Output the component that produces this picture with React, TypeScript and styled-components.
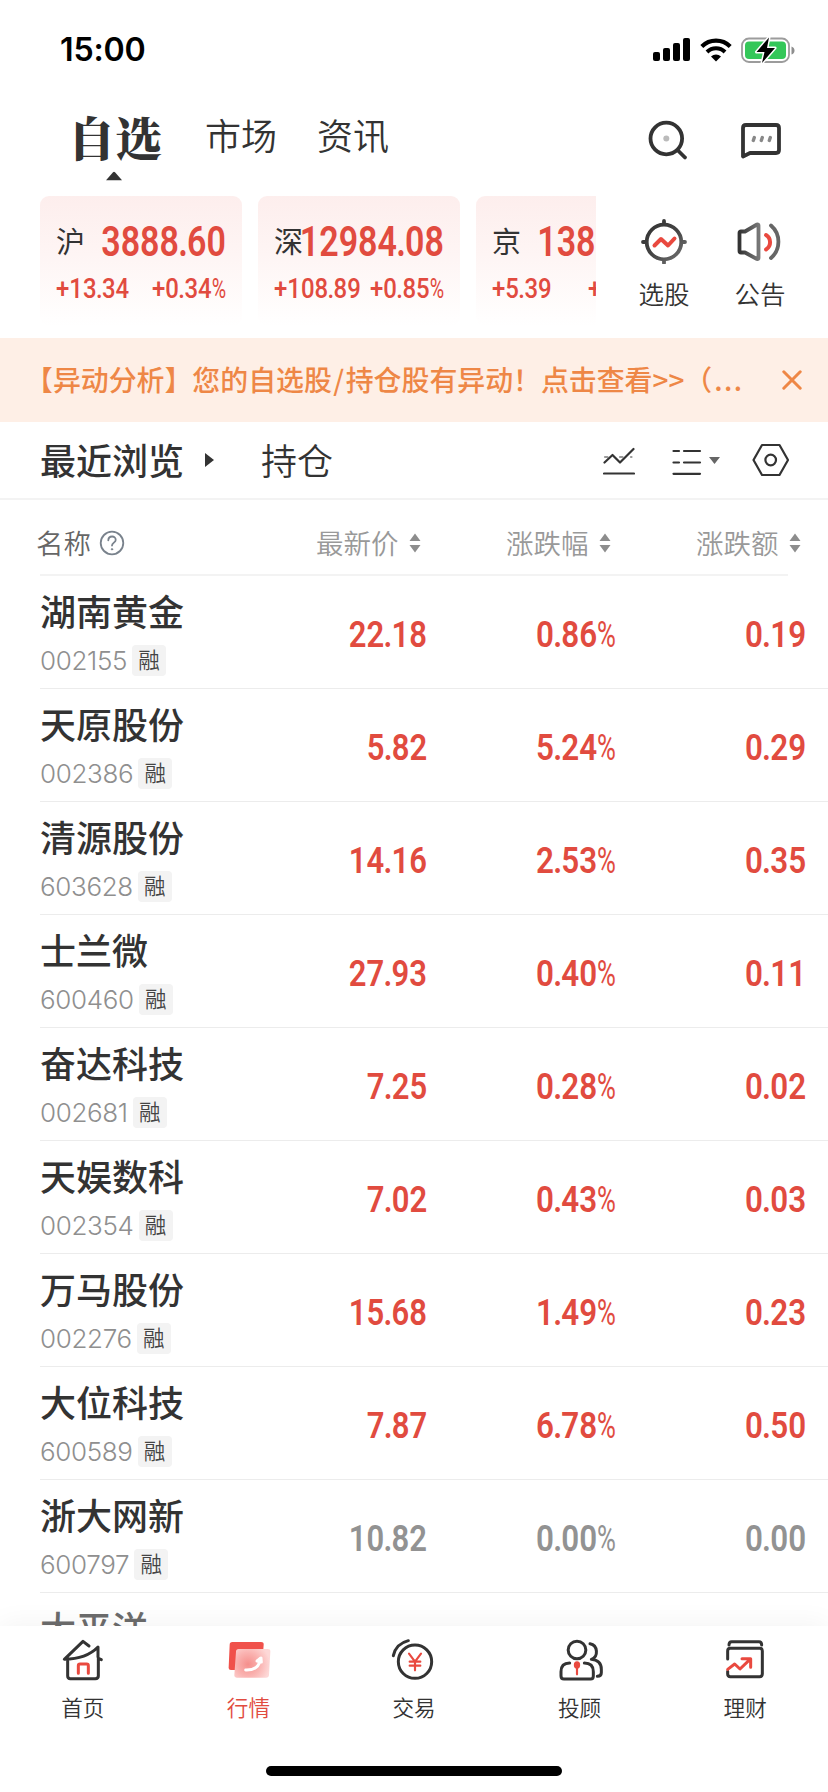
import React from "react";
import styled, { createGlobalStyle } from "styled-components";

const RED = "#e14b3f";
const INK = "#333333";
const CJK = `"Noto Sans CJK SC", "Noto Sans", sans-serif`;

const GlobalStyle = createGlobalStyle`
  * { box-sizing: border-box; }
  body { margin: 0; background: #fff; font-family: ${CJK}; color: ${INK}; }
  svg { display: block; flex: none; }
`;

const Screen = styled.div`
  width: 828px;
  height: 1792px;
  display: flex;
  flex-direction: column;
  overflow: hidden;
  background: #fff;
`;

/* status bar */
const StatusBar = styled.div`
  height: 96px;
  padding: 3px 33px 0 60px;
  display: flex;
  align-items: center;
  justify-content: space-between;
`;
const Clock = styled.div`
  font: 600 32.2px/40px Inter, sans-serif;
  letter-spacing: -0.2px;
  margin-top: 1px;
  color: #000;
`;
const StatusIcons = styled.div`
  display: flex;
  gap: 9px;
  align-items: center;
`;

/* top navigation */
const TopNav = styled.div`
  height: 100px;
  display: flex;
  padding: 0 45px 0 68px;
`;
const NavTitle = styled.div`
  width: 98px;
  height: 86px;
  display: flex;
  flex-direction: column;
  font-family: "Noto Serif CJK SC", "Noto Serif SC", ${CJK};
  font-size: 47px;
  line-height: 80px;
  font-weight: 900;
  white-space: nowrap;
`;
const NavTitleText = styled.div`
  height: 75px;
`;
const NavCaret = styled.svg`
  margin-left: 37px;
`;
const NavItem = styled.div`
  margin-left: ${(p: { $gap: number }) => p.$gap}px;
  font-size: 36px;
  line-height: 77px;
  font-weight: 350;
`;
const NavActions = styled.div`
  margin-left: auto;
  display: flex;
  gap: 49px;
  padding-top: 23px;
  height: 70px;
`;

/* index cards */
const IndexStrip = styled.div`
  height: 142px;
  padding-left: 40px;
  display: flex;
`;
const CardList = styled.div`
  width: 556px;
  display: flex;
  gap: 16px;
  overflow: hidden;
`;
const Card = styled.div`
  flex: none;
  width: 202px;
  height: 130px;
  padding: 22px 16.5px 0 16px;
  border-radius: 9px;
  background: linear-gradient(#fdeeed 0%, #fef5f4 45%, #ffffff 100%);
`;
const CardTop = styled.div`
  height: 48px;
  display: flex;
  align-items: center;
  justify-content: space-between;
`;
const CardName = styled.div`
  width: 29px;
  font-size: 29px;
  line-height: 40px;
  margin-top: -5px;
`;
const CardBottom = styled.div`
  height: 47px;
  display: flex;
  align-items: center;
  justify-content: space-between;
`;
const Shortcuts = styled.div`
  display: flex;
  padding: 20px 0 0 20px;
`;
const Shortcut = styled.div`
  width: 96px;
  display: flex;
  flex-direction: column;
  align-items: center;
  font-size: 25.5px;
  line-height: 36px;
  gap: 10.5px;
  font-weight: 350;
`;

/* condensed figures */
type FigureProps = { $size: number; $scale: number; $weight: number; $color?: string; $origin?: string };
const Figure = styled.span<FigureProps>`
  display: inline-flex;
  align-items: baseline;
  font-family: Roboto, sans-serif;
  font-size: ${(p) => p.$size}px;
  font-weight: ${(p) => p.$weight};
  line-height: 1.2;
  color: ${(p) => p.$color || RED};
  transform: scaleX(${(p) => p.$scale});
  transform-origin: ${(p) => p.$origin || "right"} center;
  white-space: nowrap;
`;
const FigureBox = styled.span`
  display: flex;
  width: 0;
  justify-content: ${(p: { $origin: string }) => (p.$origin === "left" ? "flex-start" : "flex-end")};
`;
const Dot = styled.span`
  margin: 0 -0.025em;
`;
const Percent = styled.span`
  display: inline-block;
  width: 0.59em;
  font-weight: 450;
  transform: scaleX(0.82);
  transform-origin: left center;
`;

function Num({ value, size, scale, weight = 580, color, origin = "right" }: {
  value: string; size: number; scale: number; weight?: number; color?: string; origin?: string;
}) {
  const pct = value.endsWith("%");
  const [whole, frac] = value.replace("%", "").split(".");
  return (
    <FigureBox $origin={origin}>
      <Figure $size={size} $scale={scale} $weight={weight} $color={color} $origin={origin}>
        {whole}<Dot>.</Dot>{frac}{pct && <Percent>%</Percent>}
      </Figure>
    </FigureBox>
  );
}

/* notice banner */
const Notice = styled.div`
  height: 84px;
  padding: 0 26px 0 25px;
  display: flex;
  align-items: center;
  justify-content: space-between;
  background: #feefe6;
  color: #ee8746;
`;
const NoticeText = styled.div`
  font-size: 27.9px;
  font-weight: 450;
  line-height: 40px;
  margin-top: -2px;
  white-space: nowrap;
`;
const Slash = styled.span`
  padding: 0 1.5px;
`;
const Dots = styled.span`
  padding-left: 2px;
  letter-spacing: 1.5px;
`;

/* group bar */
const GroupBar = styled.div`
  height: 78px;
  padding: 0 39px 0 40px;
  display: flex;
  align-items: center;
  border-bottom: 2px solid #f3f3f3;
`;
const GroupName = styled.div<{ $active?: boolean }>`
  font-size: 36px;
  line-height: 50px;
  margin-top: -2px;
  font-weight: ${(p) => (p.$active ? 500 : 350)};
`;
const GroupCaret = styled.svg`
  margin: 0 46px 0 20px;
`;
const GroupTools = styled.div`
  margin-left: auto;
  display: flex;
  align-items: center;
`;
const ListTool = styled.div`
  margin: 0 32px 0 37px;
  display: flex;
  align-items: center;
  gap: 7px;
`;

/* quote table */
const HeadRow = styled.div`
  height: 76px;
  padding-top: 11px;
  margin: 0 40px 0 40px;
  display: flex;
  align-items: center;
  border-bottom: 2px solid #f3f3f3;
  font-size: 27.5px;
  line-height: 40px;
  font-weight: 350;
  color: #999;
`;
const HeadName = styled.div`
  width: 280px;
  flex: none;
  margin-left: -4px;
  display: flex;
  align-items: center;
  gap: 8px;
  color: #666;
`;
const HeadCell = styled.div<{ $w: number }>`
  width: ${(p) => p.$w}px;
  flex: none;
  display: flex;
  align-items: center;
  gap: 10px;
`;
const HeadLabel = styled.span`
  margin-top: -2px;
`;
const Rows = styled.div`
  height: 1050px;
  overflow: hidden;
`;
const Row = styled.div`
  height: 113px;
  margin-left: 40px;
  display: flex;
  align-items: center;
  border-bottom: 1px solid #ececec;
`;
const Stock = styled.div`
  width: 220px;
  height: 112px;
  padding-top: 10px;
`;
const StockName = styled.div<{ $dim?: boolean }>`
  font-size: 36px;
  line-height: 48px;
  font-weight: 500;
  color: ${(p) => (p.$dim ? "#6c6c6c" : INK)};
`;
const StockMeta = styled.div`
  display: flex;
  align-items: center;
  gap: 5px;
  margin-top: 11px;
`;
const Code = styled.span`
  font: 300 26px/30px Inter, sans-serif;
  letter-spacing: -0.35px;
  color: #8f8f8f;
`;
const Tag = styled.span`
  width: 34px;
  height: 31px;
  border-radius: 4px;
  background: #f3f3f3;
  font-size: 21.5px;
  line-height: 27px;
  text-align: center;
  font-weight: 350;
  color: #444;
`;
const Cell = styled.div<{ $w: number }>`
  width: ${(p) => p.$w}px;
  flex: none;
  display: flex;
  justify-content: flex-end;
  padding-top: 6px;
`;

/* tab bar */
const TabBar = styled.div`
  position: relative;
  height: 130px;
  display: flex;
  background: #fff;
  box-shadow: 0 -2px 26px rgba(0, 0, 0, 0.05);
`;
const Tab = styled.div<{ $active?: boolean }>`
  flex: 1;
  padding-top: 9px;
  display: flex;
  flex-direction: column;
  align-items: center;
  gap: 9px;
  font-size: 21.6px;
  line-height: 30px;
  font-weight: 350;
  color: ${(p) => (p.$active ? RED : INK)};
`;
const HomeArea = styled.div`
  position: relative;
  height: 36px;
  padding-top: 10px;
  display: flex;
  justify-content: center;
  background: #fff;
`;
const HomeIndicator = styled.div`
  width: 296px;
  height: 10px;
  border-radius: 5px;
  background: #000;
`;

const Signal = () => (
  <svg width="38" height="24" viewBox="0 0 38 24">
    <rect x="0" y="14" width="7" height="9" rx="2" />
    <rect x="10" y="10" width="7" height="13" rx="2" />
    <rect x="20" y="5" width="7" height="18" rx="2" />
    <rect x="30" y="0" width="7" height="23" rx="2" />
  </svg>
);
const Wifi = () => (
  <svg width="32" height="24" viewBox="0 0 32 24" fill="none" stroke="#000">
    <path d="M1.8 8.4a20.2 20.2 0 0 1 28.4 0" strokeWidth="4.2" />
    <path d="M7 14a12.8 12.8 0 0 1 18 0" strokeWidth="4" />
    <path d="M11 18.4a7.2 7.2 0 0 1 10 0L16 23.4z" fill="#000" stroke="none" />
  </svg>
);
const Battery = () => (
  <svg width="54" height="28" viewBox="0 0 54 28">
    <rect x="1" y="2.5" width="47" height="23.5" rx="7" fill="none" stroke="#9c9c9c" strokeWidth="1.8" />
    <rect x="4" y="5.5" width="41" height="17.5" rx="4" fill="#34c759" />
    <path d="M50.5 10.5q3 1 3 4t-3 4z" fill="#8e8e8e" />
    <path d="M28 1.500L15.500 16h8L21 27 34 12h-8z" fill="#000" stroke="#fff" strokeWidth="3" strokeLinejoin="round" />
    <path d="M28 1.500L15.500 16h8L21 27 34 12h-8z" fill="#000" />
  </svg>
);
const Search = () => (
  <svg width="44" height="44" viewBox="0 0 44 44" fill="none" stroke={INK} strokeWidth="3.8" strokeLinecap="round">
    <circle cx="20.300" cy="19.500" r="15.800" />
    <path d="M32 31.500l7 7" />
    <circle cx="20.300" cy="19.500" r="3" fill="#bbb" stroke="none" />
  </svg>
);
const Chat = () => (
  <svg width="44" height="44" viewBox="0 0 44 44" fill="none" stroke={INK} strokeWidth="3.8" strokeLinecap="round" strokeLinejoin="round">
    <path d="M4 37.500V9q0-3 3-3h30q3 0 3 3v22q0 3-3 3H11z" />
    <path d="M15.300 18.500l-1 3M23.300 18.500l-1 3M31.300 18.500l-1 3" stroke="#888" strokeWidth="3.400" />
  </svg>
);
const PickStock = () => (
  <svg width="48" height="48" viewBox="0 0 48 48" fill="none" strokeLinecap="round" strokeLinejoin="round">
    <defs>
      <linearGradient id="pick" gradientUnits="userSpaceOnUse" x1="6" y1="6" x2="44" y2="46">
        <stop offset="0" stopColor="#333" /><stop offset="0.500" stopColor="#444" /><stop offset="1" stopColor="#777" />
      </linearGradient>
    </defs>
    <g stroke="url(#pick)" strokeWidth="3.800">
      <circle cx="24" cy="26" r="17.300" />
      <path d="M24 5v3M24 44v3M3 26h3M42 26h3" />
    </g>
    <path d="M14.500 29.500l6.500-6.500 7 6.500 6.500-7" stroke="#e9493f" strokeWidth="4" />
  </svg>
);
const Speaker = () => (
  <svg width="48" height="48" viewBox="0 0 48 48" fill="none" strokeLinecap="round" strokeLinejoin="round" strokeWidth="3.800">
    <defs>
      <linearGradient id="spk" x1="0" y1="0" x2="1" y2="0">
        <stop offset="0" stopColor="#333" /><stop offset="1" stopColor="#777" />
      </linearGradient>
    </defs>
    <path d="M9 15.500h-4q-1.500 0-1.500 1.500v18q0 1.500 1.500 1.500h4l12 6.500q1.500.5 1.500-1V9.500q0-1.500-1.500-1z" stroke="url(#spk)" />
    <path d="M35 9.500a21.500 21.500 0 0 1 0 32.500" stroke="#666" />
    <path d="M30 19a8.500 8.500 0 0 1 0 14.500" stroke="#e9493f" strokeWidth="4" />
  </svg>
);
const Close = () => (
  <svg width="20" height="20" viewBox="0 0 20 20" stroke="#ee8746" strokeWidth="3" strokeLinecap="round">
    <path d="M1.800 1.800l16.400 16.400M18.200 1.800L1.800 18.200" />
  </svg>
);
const Trend = () => (
  <svg width="32" height="32" viewBox="0 0 32 32" fill="none" stroke={INK} strokeWidth="2.200" strokeLinecap="round" strokeLinejoin="round">
    <path d="M2 13h2.500M17 13h2.500M28 13h.5" stroke="#999" />
    <path d="M1.500 18.500L9.500 11l7.500 7.500L30.500 5M1 29.500h30" />
  </svg>
);
const ListIcon = () => (
  <svg width="30" height="32" viewBox="0 0 30 32" stroke={INK} strokeWidth="2.200" strokeLinecap="round">
    <path d="M1.500 7h5.500M12 7h16M1.500 18.500h5.500M12 18.500h16M1.500 29.800h26.500" />
  </svg>
);
const DropCaret = () => (
  <svg width="11" height="7" viewBox="0 0 11 7" fill="#666"><path d="M0 0h11L5.500 7z" /></svg>
);
const Hexagon = () => (
  <svg width="37" height="34" viewBox="0 0 37 34" fill="none" stroke={INK} strokeWidth="2.200" strokeLinejoin="round">
    <path d="M10 2h17.500l8.500 15-8.500 15H10L1.500 17z" />
    <circle cx="18.700" cy="17" r="5.300" />
  </svg>
);
const Help = () => (
  <svg width="26" height="26" viewBox="0 0 26 26" fill="none" stroke="#79828c" strokeWidth="1.800" strokeLinecap="round">
    <circle cx="13" cy="13" r="11.300" />
    <path d="M9.300 10.300c.2-5.200 7.600-4.800 7.400-.3-.1 2.600-3.700 2.800-3.700 5.600" />
    <circle cx="13" cy="19.300" r="0.700" fill="#79828c" strokeWidth="1" />
  </svg>
);
const Sort = () => (
  <svg width="12" height="20" viewBox="0 0 12 20" fill="#8d8d8d">
    <path d="M6 0.500l5.500 7.500H.5zM6 19.500L.5 12h11z" />
  </svg>
);

/* tab icons share a 144-unit square, three units to a pixel */
const TabSvg = styled.svg.attrs({ width: 48, height: 48, viewBox: "0 0 144 144" })`
  fill: none;
  stroke: ${INK};
  stroke-width: 9px;
  stroke-linecap: round;
  stroke-linejoin: round;
`;
const FinePath = styled.path`
  stroke-width: 6.5px;
`;
const HomeIcon = () => (
  <TabSvg>
    <path d="M90 33L72 19 16 73Q82 72 117 36V66" />
    <path d="M26 78v45q0 8 8 8h75q9 0 9-8V72M118 70l9 4" />
    <path d="M58 115V92q0-5 5-5h20q5 0 5 5v23" stroke="#e9493f" />
  </TabSvg>
);
const MarketIcon = () => (
  <TabSvg>
    <defs>
      <radialGradient id="mk" gradientUnits="userSpaceOnUse" cx="72" cy="88" r="66">
        <stop offset="0" stopColor="#f58f8c" /><stop offset="0.550" stopColor="#fab4b2" /><stop offset="1" stopColor="#fdd8d7" />
      </radialGradient>
    </defs>
    <path d="M25 21h86q9 0 8 8l-5 68q-1 8-9 8H21q-8 0-7-8l3-68q0-8 8-8z" fill="#f0514b" stroke="none" />
    <path d="M44 42h87q9 0 8 8l-4 70q-1 8-9 8H38q-8 0-7-8l5-70q0-8 8-8z" fill="url(#mk)" stroke="none" />
    <path d="M65 105c26 1 43-11 43-34" stroke="#fff" />
    <path d="M99 78l12-9 1 12z" fill="#fff" stroke="#fff" />
  </TabSvg>
);
const TradeIcon = () => (
  <TabSvg>
    <circle cx="75" cy="80" r="50" />
    <path d="M10 62Q18 26 55 17" />
    <FinePath d="M57 56l18 24 18-24M75 80v26M59 80h32M59 92h32" stroke="#e9493f" />
  </TabSvg>
);
const AdvisorIcon = () => (
  <TabSvg>
    <circle cx="63" cy="45" r="26.500" />
    <path d="M41 84Q15 84 15 110v13q0 9 9 9h80q8 0 8-9v-13Q112 84 85 84" />
    <path d="M102 26c24 4 26 40 4 47 20 2 30 14 30 30v10q0 10-12 11" />
    <ellipse cx="63" cy="90" rx="9.500" ry="11" fill="#e9493f" stroke="none" />
    <FinePath d="M63 98v20" stroke="#e9493f" />
  </TabSvg>
);
const WealthIcon = () => (
  <TabSvg>
    <path d="M24 30q0-10 8-10h82q8 0 8 10" />
    <path d="M20 72V48q0-8 8-8h88q8 0 8 8v69q0 8-8 8H28q-8 0-8-8v-8" />
    <path d="M20 103l21-16 16 15 30-29M63 71h26v26" stroke="#e9493f" />
  </TabSvg>
);

const INDICES = [
  { name: "沪", value: "3888.60", change: "+13.34", percent: "+0.34%" },
  { name: "深", value: "12984.08", change: "+108.89", percent: "+0.85%" },
  { name: "京", value: "1387.06", change: "+5.39", percent: "+0.39%" },
];

const STOCKS = [
  ["湖南黄金", "002155", "22.18", "0.86%", "0.19"],
  ["天原股份", "002386", "5.82", "5.24%", "0.29"],
  ["清源股份", "603628", "14.16", "2.53%", "0.35"],
  ["士兰微", "600460", "27.93", "0.40%", "0.11"],
  ["奋达科技", "002681", "7.25", "0.28%", "0.02"],
  ["天娱数科", "002354", "7.02", "0.43%", "0.03"],
  ["万马股份", "002276", "15.68", "1.49%", "0.23"],
  ["大位科技", "600589", "7.87", "6.78%", "0.50"],
  ["浙大网新", "600797", "10.82", "0.00%", "0.00"],
];

const TABS = [
  { label: "首页", Icon: HomeIcon },
  { label: "行情", Icon: MarketIcon, active: true },
  { label: "交易", Icon: TradeIcon },
  { label: "投顾", Icon: AdvisorIcon },
  { label: "理财", Icon: WealthIcon },
];

export default function App() {
  return (
    <Screen>
      <GlobalStyle />
      <StatusBar>
        <Clock>15:00</Clock>
        <StatusIcons><Signal /><Wifi /><Battery /></StatusIcons>
      </StatusBar>

      <TopNav>
        <NavTitle>
          <NavTitleText>自选</NavTitleText>
          <NavCaret width="18" height="10" viewBox="0 0 18 10" fill={INK}>
            <path d="M1 9.200L8 1.200q1-1 2 0l7 8z" />
          </NavCaret>
        </NavTitle>
        <NavItem $gap={39}>市场</NavItem>
        <NavItem $gap={40}>资讯</NavItem>
        <NavActions><Search /><Chat /></NavActions>
      </TopNav>

      <IndexStrip>
        <CardList>
          {INDICES.map((i) => (
            <Card key={i.name}>
              <CardTop>
                <CardName>{i.name}</CardName>
                <Num value={i.value} size={42} scale={0.81} />
              </CardTop>
              <CardBottom>
                <Num value={i.change} size={28.5} scale={0.84} weight={500} origin="left" />
                <Num value={i.percent} size={28.5} scale={0.84} weight={500} />
              </CardBottom>
            </Card>
          ))}
        </CardList>
        <Shortcuts>
          <Shortcut><PickStock />选股</Shortcut>
          <Shortcut><Speaker />公告</Shortcut>
        </Shortcuts>
      </IndexStrip>

      <Notice>
        <NoticeText>
          【异动分析】您的自选股<Slash>/</Slash>持仓股有异动！点击查看&gt;&gt;（<Dots>...</Dots>
        </NoticeText>
        <Close />
      </Notice>

      <GroupBar>
        <GroupName $active>最近浏览</GroupName>
        <GroupCaret width="11" height="16" viewBox="0 0 11 16" fill={INK}><path d="M1 1l9 7-9 7z" /></GroupCaret>
        <GroupName>持仓</GroupName>
        <GroupTools>
          <Trend />
          <ListTool><ListIcon /><DropCaret /></ListTool>
          <Hexagon />
        </GroupTools>
      </GroupBar>

      <HeadRow>
        <HeadName><HeadLabel>名称</HeadLabel><Help /></HeadName>
        <HeadCell $w={190}><HeadLabel>最新价</HeadLabel><Sort /></HeadCell>
        <HeadCell $w={190}><HeadLabel>涨跌幅</HeadLabel><Sort /></HeadCell>
        <HeadCell $w={106}><HeadLabel>涨跌额</HeadLabel><Sort /></HeadCell>
      </HeadRow>

      <Rows>
        {STOCKS.map(([name, code, price, percent, change]) => {
          const color = change === "0.00" ? "#929292" : RED;
          return (
            <Row key={code}>
              <Stock>
                <StockName>{name}</StockName>
                <StockMeta><Code>{code}</Code><Tag>融</Tag></StockMeta>
              </Stock>
              <Cell $w={167}><Num value={price} size={36.500} scale={0.85} color={color} /></Cell>
              <Cell $w={189}><Num value={percent} size={36.500} scale={0.86} color={color} /></Cell>
              <Cell $w={190}><Num value={change} size={36.500} scale={0.86} color={color} /></Cell>
            </Row>
          );
        })}
        <Row><Stock><StockName $dim>太平洋</StockName></Stock></Row>
      </Rows>

      <TabBar>
        {TABS.map(({ label, Icon, active }) => (
          <Tab key={label} $active={active}><Icon />{label}</Tab>
        ))}
      </TabBar>
      <HomeArea><HomeIndicator /></HomeArea>
    </Screen>
  );
}
